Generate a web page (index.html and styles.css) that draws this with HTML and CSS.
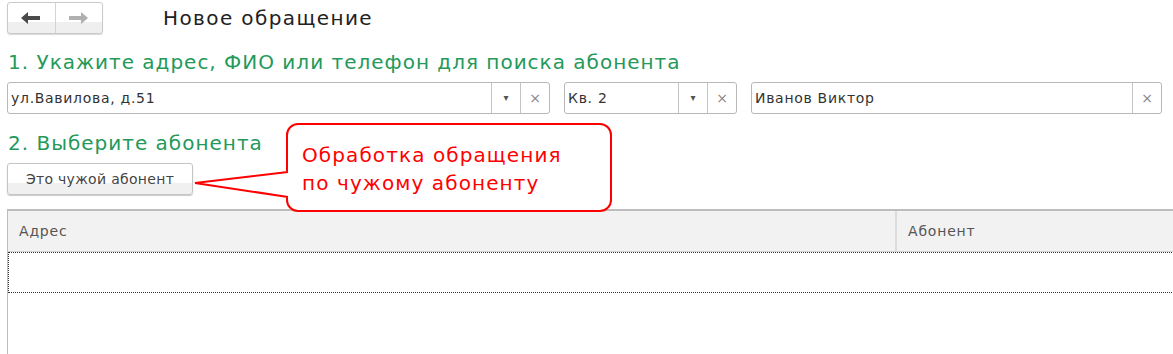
FILE: index.html
```html
<!DOCTYPE html>
<html lang="ru">
<head>
  <meta charset="UTF-8" />
  <title>Новое обращение</title>
  <link rel="stylesheet" href="styles.css">
</head>
<body>
  <div class="topbar">
    <div class="nav">
      <button class="nav-btn">
        <svg width="20" height="12" viewBox="0 0 20 12"><path d="M0 6 L7 0 L7 4 L19 4 L19 8 L7 8 L7 12 Z" fill="#4a4a4a"/></svg>
      </button>
      <button class="nav-btn">
        <svg width="20" height="12" viewBox="0 0 20 12"><path d="M19 6 L12 0 L12 4 L0 4 L0 8 L12 8 L12 12 Z" fill="#b0b0b0"/></svg>
      </button>
    </div>
    <div class="title">Новое обращение</div>
  </div>

  <h2 class="step step-1">1. Укажите адрес, ФИО или телефон для поиска абонента</h2>

  <div class="fields">
    <div class="field field-address">
      <span class="field-text">ул.Вавилова, д.51</span>
      <span class="field-btn">&#9662;</span>
      <span class="field-btn clear">&times;</span>
    </div>
    <div class="field field-flat">
      <span class="field-text">Кв. 2</span>
      <span class="field-btn">&#9662;</span>
      <span class="field-btn clear">&times;</span>
    </div>
    <div class="field field-name">
      <span class="field-text">Иванов Виктор</span>
      <span class="field-btn clear">&times;</span>
    </div>
  </div>

  <h2 class="step step-2">2. Выберите абонента</h2>

  <button class="action">Это чужой абонент</button>

  <div class="grid">
    <div class="grid-head">
      <div class="col col-address">Адрес</div>
      <div class="col col-client">Абонент</div>
    </div>
    <div class="grid-row"></div>
  </div>

  <div class="callout">
    <div class="callout-text">Обработка обращения<br>по чужому абоненту</div>
  </div>
  <svg class="callout-tail" width="100" height="40" viewBox="0 0 100 40">
    <polygon points="2,18 97,6 97,33" fill="#fff"/>
    <polyline points="95,7 2,18 95,32" fill="none" stroke="#f00" stroke-width="2" stroke-linejoin="miter"/>
  </svg>
</body>
</html>
```

FILE: styles.css
```css
body {
  margin: 0;
  width: 1173px;
  height: 354px;
  overflow: hidden;
  position: relative;
  background: #fff;
  font-family: "DejaVu Sans", "Liberation Sans", sans-serif;
  color: #333;
}

.topbar {
  display: flex;
  align-items: center;
  padding: 2px 0 0 7px;
}

.nav {
  display: flex;
  width: 96px;
  height: 32px;
  box-sizing: border-box;
  border: 1px solid #c9c9c9;
  border-radius: 3px;
  background: linear-gradient(#fff 64%, #efefef 64%);
  box-shadow: 0 1px 1px rgba(0, 0, 0, 0.15);
}

.nav-btn {
  flex: 1;
  display: flex;
  align-items: center;
  justify-content: center;
  padding: 0;
  border: none;
  background: transparent;
}

.nav-btn + .nav-btn {
  border-left: 1px solid #d4d4d4;
}

.title {
  margin-left: 60px;
  font-size: 20px;
  letter-spacing: 1.4px;
  color: #222;
}

.step {
  margin: 0;
  padding-left: 8px;
  font-size: 20px;
  line-height: 24px;
  letter-spacing: 1px;
  font-weight: normal;
  color: #23995a;
}

.step-1 { margin-top: 16px; }
.step-2 { margin-top: 17px; }

.fields {
  display: flex;
  gap: 14px;
  margin-top: 8px;
  padding-left: 7px;
}

.field {
  display: flex;
  height: 32px;
  box-sizing: border-box;
  border: 1px solid #b8b8b8;
  border-radius: 3px;
  background: #fff;
}

.field-address { width: 543px; }
.field-flat { width: 173px; }
.field-name { width: 411px; }

.field-text {
  flex: 1;
  padding-left: 3px;
  font-size: 14px;
  letter-spacing: 0.7px;
  line-height: 30px;
  color: #333;
}

.field-btn {
  width: 28px;
  border-left: 1px solid #c4c4c4;
  text-align: center;
  font-size: 10px;
  line-height: 30px;
  color: #555;
}

.field-btn.clear {
  font-size: 14px;
  color: #888;
}

.action {
  display: block;
  margin: 8px 0 0 7px;
  width: 186px;
  height: 32px;
  padding: 0;
  border: 1px solid #c4c4c4;
  border-radius: 3px;
  background: linear-gradient(#fff 64%, #f0f0f0 64%);
  box-shadow: 0 1px 1px rgba(0, 0, 0, 0.2);
  font-family: "DejaVu Sans", "Liberation Sans", sans-serif;
  font-size: 14px;
  letter-spacing: 0.3px;
  color: #444;
}

.grid {
  margin: 14px 0 0 7px;
  width: 1180px;
  height: 160px;
  box-sizing: border-box;
  border: 1px solid #bdbdbd;
  border-top-width: 2px;
}

.grid-head {
  display: flex;
  height: 40px;
  background: #f2f2f2;
  border-bottom: 1px solid #d2d2d2;
}

.col {
  padding-left: 11px;
  font-size: 14px;
  letter-spacing: 0.8px;
  line-height: 40px;
  color: #555;
}

.col-address {
  width: 876px;
  border-right: 2px solid #dcdcdc;
}

.col-client {
  flex: 1;
}

.grid-row {
  height: 41px;
  box-sizing: border-box;
  border: 1px dotted #333;
}

.callout {
  position: absolute;
  left: 286px;
  top: 123px;
  width: 326px;
  height: 89px;
  box-sizing: border-box;
  border: 2px solid #f00;
  border-radius: 12px;
  background: #fff;
  padding: 16px 0 0 14px;
}

.callout-text {
  font-size: 20px;
  line-height: 28px;
  letter-spacing: 1.1px;
  color: #f00;
}

.callout-tail {
  position: absolute;
  left: 193px;
  top: 165px;
}
```
